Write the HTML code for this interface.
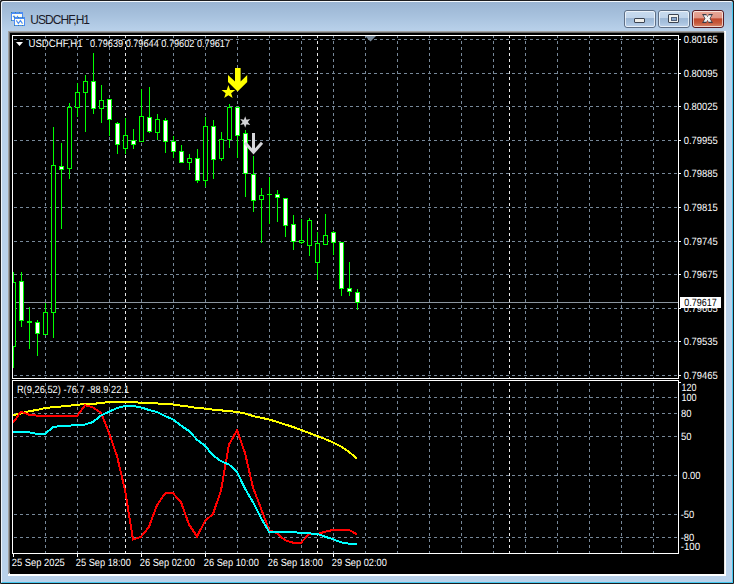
<!DOCTYPE html>
<html><head><meta charset="utf-8"><title>USDCHF,H1</title><style>
html,body{margin:0;padding:0;background:#ffffff;}
body{width:736px;height:584px;position:relative;overflow:hidden;font-family:"Liberation Sans",sans-serif;}
#win{position:absolute;left:0;top:0;width:732px;height:582px;border:1px solid #1c1c1e;border-radius:1px 1px 0 0;
 background:#b9d1ea;overflow:hidden;}
#win:before{content:"";position:absolute;left:0;top:0;right:0;bottom:0;border-left:1px solid #eef4fb;border-top:1px solid #f4f8fc;border-right:1px solid #46c8f0;border-bottom:1px solid #46c8f0;border-radius:3px 3px 0 0;box-shadow:0 0 0 3px #3a3e42;}
#title{position:absolute;left:1px;top:1px;width:730px;height:29px;border-radius:2px 2px 0 0;background:linear-gradient(#9ab4d2,#a8c2de 50%,#b9d1ea);}
#ico{position:absolute;left:9px;top:10px;}
#ttl{position:absolute;left:28.3px;top:11px;font-size:12px;color:#1a1a28;letter-spacing:-0.95px;white-space:nowrap;}
.btn{position:absolute;top:9px;width:30px;height:16px;border:1px solid #5e6f86;border-radius:3px;overflow:hidden;
 background:linear-gradient(#c8dbef 0%,#c0d4ea 45%,#9db8d6 47%,#a8c2de 75%,#bed4ec 100%);}
.bi{position:absolute;left:0;top:0;right:0;bottom:0;border:1px solid rgba(255,255,255,0.65);border-radius:2px;}
#bmin{left:623px;}
#bmax{left:657px;}
#bcls{left:691px;border-color:#5a1c24;background:linear-gradient(#e8a898 0%,#e09585 45%,#c0472c 48%,#c65a3c 75%,#d88a70 100%);}
#imin{position:absolute;left:9px;top:7px;width:9px;height:3px;border:1px solid #3c4452;border-radius:1px;background:#eeeeea;}
#imax{position:absolute;left:9px;top:3px;width:9px;height:7px;border:1px solid #3c4452;border-radius:1px;background:#f2f2ee;}
#imax div{position:absolute;left:2px;top:2px;width:4px;height:2px;border:0.5px solid #50607a;background:#8aa8cc;}
#icls{position:absolute;left:8px;top:2px;}
#chart{position:absolute;left:0;top:0;}
</style></head>
<body>

<div id="win">
  <div id="title">
    <svg id="ico" width="16" height="16" viewBox="0 0 16 16">
      <g shape-rendering="crispEdges">
      <rect x="0" y="0" width="12" height="9" fill="#4c8cf4"/>
      <rect x="1" y="2" width="10" height="6" fill="#fffff4"/>
      <path d="M0,0.5 H12 M0,8.5 H12" stroke="#3f8a5a" stroke-width="1" stroke-dasharray="1 3" opacity="0.7"/>
      <rect x="3" y="5" width="11" height="9" fill="#4c8cf4"/>
      <rect x="4" y="7" width="9" height="6" fill="#fffff4"/>
      <path d="M3,5.5 H14 M3,13.5 H14" stroke="#3f8a5a" stroke-width="1" stroke-dasharray="1 3" opacity="0.7"/>
      </g>
      <path d="M2,5.2 L3,4 L4,5.2 M6,4 L7,5" stroke="#4c8cf4" fill="none" stroke-width="1.1"/>
      <path d="M5.3,8.4 L7.4,11.6 L9.4,8.4 L11.5,11.6" stroke="#4c8cf4" fill="none" stroke-width="1.1"/>
    </svg>
    <span id="ttl">USDCHF,H1</span>
  </div>
  <div class="btn" id="bmin"><div class="bi"></div><div id="imin"></div></div>
  <div class="btn" id="bmax"><div class="bi"></div><div id="imax"><div></div></div></div>
  <div class="btn" id="bcls"><div class="bi"></div>
    <svg id="icls" width="14" height="12" viewBox="701 13 14 12"><polygon points="702.00,14.00 706.20,14.00 707.50,16.60 708.80,14.00 713.00,14.00 710.30,18.50 713.00,23.00 708.80,23.00 707.50,20.40 706.20,23.00 702.00,23.00 704.70,18.50" fill="#3a3c48"/><polygon points="703.54,15.26 706.56,15.26 707.50,17.13 708.44,15.26 711.46,15.26 709.52,18.50 711.46,21.74 708.44,21.74 707.50,19.87 706.56,21.74 703.54,21.74 705.48,18.50" fill="#f4f4f4"/></svg>
  </div>
</div>

<svg id="chart" width="736" height="584" viewBox="0 0 736 584"><rect x="8" y="31" width="718" height="545" fill="#ffffff"/><rect x="8" y="31" width="716" height="543" fill="#a0a0a0"/><rect x="9" y="32" width="715" height="542" fill="#696969"/><rect x="724" y="32" width="1" height="542" fill="#e3e3e3"/><rect x="9" y="573" width="716" height="1" fill="#e3e3e3"/><rect x="10" y="33" width="714" height="541" fill="#000"/><defs><clipPath id="cm"><rect x="13" y="36" width="665" height="342"/></clipPath><clipPath id="ci"><rect x="13" y="381" width="665" height="172"/></clipPath></defs><g clip-path="url(#cm)" stroke="#778899" stroke-width="1" stroke-dasharray="3 3" shape-rendering="crispEdges"><line x1="14" y1="39.5" x2="678" y2="39.5"/><line x1="14" y1="73.5" x2="678" y2="73.5"/><line x1="14" y1="106.5" x2="678" y2="106.5"/><line x1="14" y1="140.5" x2="678" y2="140.5"/><line x1="14" y1="173.5" x2="678" y2="173.5"/><line x1="14" y1="207.5" x2="678" y2="207.5"/><line x1="14" y1="241.5" x2="678" y2="241.5"/><line x1="14" y1="274.5" x2="678" y2="274.5"/><line x1="14" y1="308.5" x2="678" y2="308.5"/><line x1="14" y1="341.5" x2="678" y2="341.5"/><line x1="14" y1="375.5" x2="678" y2="375.5"/><line x1="45.5" y1="35" x2="45.5" y2="378"/><line x1="77.5" y1="35" x2="77.5" y2="378"/><line x1="109.5" y1="35" x2="109.5" y2="378"/><line x1="141.5" y1="35" x2="141.5" y2="378"/><line x1="173.5" y1="35" x2="173.5" y2="378"/><line x1="205.5" y1="35" x2="205.5" y2="378"/><line x1="237.5" y1="35" x2="237.5" y2="378"/><line x1="269.5" y1="35" x2="269.5" y2="378"/><line x1="301.5" y1="35" x2="301.5" y2="378"/><line x1="333.5" y1="35" x2="333.5" y2="378"/><line x1="365.5" y1="35" x2="365.5" y2="378"/><line x1="397.5" y1="35" x2="397.5" y2="378"/><line x1="429.5" y1="35" x2="429.5" y2="378"/><line x1="461.5" y1="35" x2="461.5" y2="378"/><line x1="493.5" y1="35" x2="493.5" y2="378"/><line x1="525.5" y1="35" x2="525.5" y2="378"/><line x1="557.5" y1="35" x2="557.5" y2="378"/><line x1="589.5" y1="35" x2="589.5" y2="378"/><line x1="621.5" y1="35" x2="621.5" y2="378"/><line x1="653.5" y1="35" x2="653.5" y2="378"/></g><g stroke="#e8e8e8" stroke-width="1" stroke-dasharray="3 3" shape-rendering="crispEdges"><line x1="125.5" y1="35" x2="125.5" y2="378"/><line x1="125.5" y1="383" x2="125.5" y2="553"/><line x1="317.5" y1="35" x2="317.5" y2="378"/><line x1="317.5" y1="383" x2="317.5" y2="553"/><line x1="509.5" y1="35" x2="509.5" y2="378"/><line x1="509.5" y1="383" x2="509.5" y2="553"/></g><g clip-path="url(#ci)" stroke="#778899" stroke-width="1" stroke-dasharray="3 3" shape-rendering="crispEdges"><line x1="14" y1="397.5" x2="678" y2="397.5"/><line x1="14" y1="413.5" x2="678" y2="413.5"/><line x1="14" y1="436.5" x2="678" y2="436.5"/><line x1="14" y1="475.5" x2="678" y2="475.5"/><line x1="14" y1="514.5" x2="678" y2="514.5"/><line x1="14" y1="537.5" x2="678" y2="537.5"/><line x1="45.5" y1="383" x2="45.5" y2="553"/><line x1="77.5" y1="383" x2="77.5" y2="553"/><line x1="109.5" y1="383" x2="109.5" y2="553"/><line x1="141.5" y1="383" x2="141.5" y2="553"/><line x1="173.5" y1="383" x2="173.5" y2="553"/><line x1="205.5" y1="383" x2="205.5" y2="553"/><line x1="237.5" y1="383" x2="237.5" y2="553"/><line x1="269.5" y1="383" x2="269.5" y2="553"/><line x1="301.5" y1="383" x2="301.5" y2="553"/><line x1="333.5" y1="383" x2="333.5" y2="553"/><line x1="365.5" y1="383" x2="365.5" y2="553"/><line x1="397.5" y1="383" x2="397.5" y2="553"/><line x1="429.5" y1="383" x2="429.5" y2="553"/><line x1="461.5" y1="383" x2="461.5" y2="553"/><line x1="493.5" y1="383" x2="493.5" y2="553"/><line x1="525.5" y1="383" x2="525.5" y2="553"/><line x1="557.5" y1="383" x2="557.5" y2="553"/><line x1="589.5" y1="383" x2="589.5" y2="553"/><line x1="621.5" y1="383" x2="621.5" y2="553"/><line x1="653.5" y1="383" x2="653.5" y2="553"/></g><rect x="13" y="302" width="665" height="1" fill="#8c96a0"/><g clip-path="url(#cm)" shape-rendering="crispEdges"><rect x="13" y="272" width="1" height="10" fill="#00ff00"/><rect x="13" y="347" width="1" height="21" fill="#00ff00"/><rect x="11" y="282" width="5" height="65" fill="#00ff00"/><rect x="12" y="283" width="3" height="63" fill="#000000"/><rect x="21" y="272" width="1" height="9" fill="#00ff00"/><rect x="21" y="321" width="1" height="6" fill="#00ff00"/><rect x="19" y="281" width="5" height="40" fill="#00ff00"/><rect x="20" y="282" width="3" height="38" fill="#ffffff"/><rect x="29" y="307" width="1" height="14" fill="#00ff00"/><rect x="29" y="323" width="1" height="26" fill="#00ff00"/><rect x="27" y="321" width="5" height="2" fill="#00ff00"/><rect x="37" y="320" width="1" height="2" fill="#00ff00"/><rect x="37" y="334" width="1" height="22" fill="#00ff00"/><rect x="35" y="322" width="5" height="12" fill="#00ff00"/><rect x="36" y="323" width="3" height="10" fill="#ffffff"/><rect x="45" y="303" width="1" height="9" fill="#00ff00"/><rect x="43" y="312" width="5" height="23" fill="#00ff00"/><rect x="44" y="313" width="3" height="21" fill="#000000"/><rect x="53" y="127" width="1" height="38" fill="#00ff00"/><rect x="53" y="313" width="1" height="25" fill="#00ff00"/><rect x="51" y="165" width="5" height="148" fill="#00ff00"/><rect x="52" y="166" width="3" height="146" fill="#000000"/><rect x="61" y="143" width="1" height="23" fill="#00ff00"/><rect x="61" y="170" width="1" height="59" fill="#00ff00"/><rect x="59" y="166" width="5" height="4" fill="#00ff00"/><rect x="60" y="167" width="3" height="2" fill="#ffffff"/><rect x="69" y="103" width="1" height="4" fill="#00ff00"/><rect x="69" y="169" width="1" height="10" fill="#00ff00"/><rect x="67" y="107" width="5" height="62" fill="#00ff00"/><rect x="68" y="108" width="3" height="60" fill="#000000"/><rect x="77" y="83" width="1" height="9" fill="#00ff00"/><rect x="77" y="108" width="1" height="9" fill="#00ff00"/><rect x="75" y="92" width="5" height="16" fill="#00ff00"/><rect x="76" y="93" width="3" height="14" fill="#000000"/><rect x="85" y="75" width="1" height="6" fill="#00ff00"/><rect x="85" y="93" width="1" height="39" fill="#00ff00"/><rect x="83" y="81" width="5" height="12" fill="#00ff00"/><rect x="84" y="82" width="3" height="10" fill="#000000"/><rect x="93" y="53" width="1" height="28" fill="#00ff00"/><rect x="93" y="109" width="1" height="5" fill="#00ff00"/><rect x="91" y="81" width="5" height="28" fill="#00ff00"/><rect x="92" y="82" width="3" height="26" fill="#ffffff"/><rect x="101" y="85" width="1" height="15" fill="#00ff00"/><rect x="101" y="109" width="1" height="14" fill="#00ff00"/><rect x="99" y="100" width="5" height="9" fill="#00ff00"/><rect x="100" y="101" width="3" height="7" fill="#000000"/><rect x="109" y="120" width="1" height="16" fill="#00ff00"/><rect x="107" y="99" width="5" height="21" fill="#00ff00"/><rect x="108" y="100" width="3" height="19" fill="#ffffff"/><rect x="117" y="122" width="1" height="1" fill="#00ff00"/><rect x="117" y="145" width="1" height="9" fill="#00ff00"/><rect x="115" y="123" width="5" height="22" fill="#00ff00"/><rect x="116" y="124" width="3" height="20" fill="#ffffff"/><rect x="125" y="118" width="1" height="17" fill="#00ff00"/><rect x="125" y="149" width="1" height="5" fill="#00ff00"/><rect x="123" y="135" width="5" height="14" fill="#00ff00"/><rect x="124" y="136" width="3" height="12" fill="#000000"/><rect x="133" y="129" width="1" height="11" fill="#00ff00"/><rect x="133" y="145" width="1" height="4" fill="#00ff00"/><rect x="131" y="140" width="5" height="5" fill="#00ff00"/><rect x="132" y="141" width="3" height="3" fill="#ffffff"/><rect x="141" y="89" width="1" height="27" fill="#00ff00"/><rect x="139" y="116" width="5" height="26" fill="#00ff00"/><rect x="140" y="117" width="3" height="24" fill="#000000"/><rect x="149" y="87" width="1" height="30" fill="#00ff00"/><rect x="149" y="132" width="1" height="1" fill="#00ff00"/><rect x="147" y="117" width="5" height="15" fill="#00ff00"/><rect x="148" y="118" width="3" height="13" fill="#ffffff"/><rect x="157" y="114" width="1" height="5" fill="#00ff00"/><rect x="157" y="133" width="1" height="7" fill="#00ff00"/><rect x="155" y="119" width="5" height="14" fill="#00ff00"/><rect x="156" y="120" width="3" height="12" fill="#000000"/><rect x="165" y="118" width="1" height="2" fill="#00ff00"/><rect x="165" y="142" width="1" height="11" fill="#00ff00"/><rect x="163" y="120" width="5" height="22" fill="#00ff00"/><rect x="164" y="121" width="3" height="20" fill="#ffffff"/><rect x="173" y="136" width="1" height="5" fill="#00ff00"/><rect x="173" y="152" width="1" height="6" fill="#00ff00"/><rect x="171" y="141" width="5" height="11" fill="#00ff00"/><rect x="172" y="142" width="3" height="9" fill="#ffffff"/><rect x="181" y="145" width="1" height="6" fill="#00ff00"/><rect x="179" y="151" width="5" height="12" fill="#00ff00"/><rect x="180" y="152" width="3" height="10" fill="#ffffff"/><rect x="189" y="154" width="1" height="4" fill="#00ff00"/><rect x="189" y="163" width="1" height="7" fill="#00ff00"/><rect x="187" y="158" width="5" height="5" fill="#00ff00"/><rect x="188" y="159" width="3" height="3" fill="#000000"/><rect x="197" y="149" width="1" height="9" fill="#00ff00"/><rect x="197" y="181" width="1" height="2" fill="#00ff00"/><rect x="195" y="158" width="5" height="23" fill="#00ff00"/><rect x="196" y="159" width="3" height="21" fill="#ffffff"/><rect x="205" y="117" width="1" height="9" fill="#00ff00"/><rect x="205" y="181" width="1" height="6" fill="#00ff00"/><rect x="203" y="126" width="5" height="55" fill="#00ff00"/><rect x="204" y="127" width="3" height="53" fill="#000000"/><rect x="213" y="120" width="1" height="6" fill="#00ff00"/><rect x="213" y="160" width="1" height="19" fill="#00ff00"/><rect x="211" y="126" width="5" height="34" fill="#00ff00"/><rect x="212" y="127" width="3" height="32" fill="#ffffff"/><rect x="221" y="132" width="1" height="7" fill="#00ff00"/><rect x="221" y="159" width="1" height="2" fill="#00ff00"/><rect x="219" y="139" width="5" height="20" fill="#00ff00"/><rect x="220" y="140" width="3" height="18" fill="#000000"/><rect x="229" y="104" width="1" height="3" fill="#00ff00"/><rect x="229" y="140" width="1" height="8" fill="#00ff00"/><rect x="227" y="107" width="5" height="33" fill="#00ff00"/><rect x="228" y="108" width="3" height="31" fill="#000000"/><rect x="237" y="136" width="1" height="22" fill="#00ff00"/><rect x="235" y="107" width="5" height="29" fill="#00ff00"/><rect x="236" y="108" width="3" height="27" fill="#ffffff"/><rect x="245" y="130" width="1" height="3" fill="#00ff00"/><rect x="245" y="174" width="1" height="23" fill="#00ff00"/><rect x="243" y="133" width="5" height="41" fill="#00ff00"/><rect x="244" y="134" width="3" height="39" fill="#ffffff"/><rect x="253" y="156" width="1" height="18" fill="#00ff00"/><rect x="253" y="201" width="1" height="11" fill="#00ff00"/><rect x="251" y="174" width="5" height="27" fill="#00ff00"/><rect x="252" y="175" width="3" height="25" fill="#ffffff"/><rect x="261" y="188" width="1" height="7" fill="#00ff00"/><rect x="261" y="200" width="1" height="43" fill="#00ff00"/><rect x="259" y="195" width="5" height="5" fill="#00ff00"/><rect x="260" y="196" width="3" height="3" fill="#000000"/><rect x="269" y="177" width="1" height="47" fill="#00ff00"/><rect x="267" y="194" width="5" height="1" fill="#00ff00"/><rect x="277" y="190" width="1" height="4" fill="#00ff00"/><rect x="277" y="198" width="1" height="24" fill="#00ff00"/><rect x="275" y="194" width="5" height="4" fill="#00ff00"/><rect x="276" y="195" width="3" height="2" fill="#ffffff"/><rect x="285" y="226" width="1" height="11" fill="#00ff00"/><rect x="283" y="198" width="5" height="28" fill="#00ff00"/><rect x="284" y="199" width="3" height="26" fill="#ffffff"/><rect x="293" y="215" width="1" height="9" fill="#00ff00"/><rect x="293" y="242" width="1" height="8" fill="#00ff00"/><rect x="291" y="224" width="5" height="18" fill="#00ff00"/><rect x="292" y="225" width="3" height="16" fill="#ffffff"/><rect x="301" y="219" width="1" height="21" fill="#00ff00"/><rect x="301" y="243" width="1" height="1" fill="#00ff00"/><rect x="299" y="240" width="5" height="3" fill="#00ff00"/><rect x="300" y="241" width="3" height="1" fill="#000000"/><rect x="309" y="218" width="1" height="2" fill="#00ff00"/><rect x="309" y="246" width="1" height="10" fill="#00ff00"/><rect x="307" y="220" width="5" height="26" fill="#00ff00"/><rect x="308" y="221" width="3" height="24" fill="#000000"/><rect x="317" y="232" width="1" height="11" fill="#00ff00"/><rect x="317" y="263" width="1" height="17" fill="#00ff00"/><rect x="315" y="243" width="5" height="20" fill="#00ff00"/><rect x="316" y="244" width="3" height="18" fill="#000000"/><rect x="325" y="214" width="1" height="21" fill="#00ff00"/><rect x="323" y="235" width="5" height="10" fill="#00ff00"/><rect x="324" y="236" width="3" height="8" fill="#000000"/><rect x="333" y="231" width="1" height="1" fill="#00ff00"/><rect x="333" y="243" width="1" height="12" fill="#00ff00"/><rect x="331" y="232" width="5" height="11" fill="#00ff00"/><rect x="332" y="233" width="3" height="9" fill="#ffffff"/><rect x="341" y="289" width="1" height="7" fill="#00ff00"/><rect x="339" y="242" width="5" height="47" fill="#00ff00"/><rect x="340" y="243" width="3" height="45" fill="#ffffff"/><rect x="349" y="262" width="1" height="26" fill="#00ff00"/><rect x="349" y="292" width="1" height="4" fill="#00ff00"/><rect x="347" y="288" width="5" height="4" fill="#00ff00"/><rect x="348" y="289" width="3" height="2" fill="#ffffff"/><rect x="357" y="289" width="1" height="3" fill="#00ff00"/><rect x="357" y="303" width="1" height="7" fill="#00ff00"/><rect x="355" y="292" width="5" height="11" fill="#00ff00"/><rect x="356" y="293" width="3" height="9" fill="#ffffff"/></g><polygon points="228,75 235,81.5 235,68 240.6,68 240.6,81.5 247.2,75 247.2,82 237.6,91.5 228,82" fill="#ffff00"/><polygon points="228.40,85.10 230.10,89.95 235.25,90.08 231.16,93.20 232.63,98.12 228.40,95.20 224.17,98.12 225.64,93.20 221.55,90.08 226.70,89.95" fill="#ffff00"/><polygon points="245.20,116.20 246.50,119.75 250.22,119.10 247.80,122.00 250.22,124.90 246.50,124.25 245.20,127.80 243.90,124.25 240.18,124.90 242.60,122.00 240.18,119.10 243.90,119.75" fill="#d2d2d6"/><path d="M253.5,133 V151 M245,142.8 L253.5,152.3 L262,142.8" fill="none" stroke="#d6d6da" stroke-width="3" stroke-linejoin="miter" stroke-miterlimit="10"/><polygon points="365,36 376,36 370.5,41.5" fill="#778899"/><g fill="none" stroke="#ffffff" stroke-width="1" shape-rendering="crispEdges"><rect x="12.5" y="35.5" width="666" height="343"/><rect x="12.5" y="380.5" width="666" height="173"/></g><g fill="#ffffff" shape-rendering="crispEdges"><rect x="679" y="39" width="2" height="1"/><rect x="679" y="73" width="2" height="1"/><rect x="679" y="106" width="2" height="1"/><rect x="679" y="140" width="2" height="1"/><rect x="679" y="173" width="2" height="1"/><rect x="679" y="207" width="2" height="1"/><rect x="679" y="241" width="2" height="1"/><rect x="679" y="274" width="2" height="1"/><rect x="679" y="308" width="2" height="1"/><rect x="679" y="341" width="2" height="1"/><rect x="679" y="375" width="2" height="1"/><rect x="679" y="382" width="2" height="1"/><rect x="13" y="554" width="1" height="3"/><rect x="77" y="554" width="1" height="3"/><rect x="141" y="554" width="1" height="3"/><rect x="205" y="554" width="1" height="3"/><rect x="269" y="554" width="1" height="3"/><rect x="333" y="554" width="1" height="3"/></g><g clip-path="url(#ci)"><polyline points="13,415 21,413.5 29,411.3 37,409.9 45,408 53,407.2 61,406.5 69,405.8 77,404.8 85,404 93,403.9 101,403 109,402 117,402 125,402 133,402 141,402.8 149,403 157,403.4 165,404 173,404.5 181,405.6 189,406.7 197,407.9 205,408.6 213,409.7 221,410.4 229,411 237,412 245,413.5 253,416 261,417.7 269,419.5 277,421.8 285,424.4 293,427 301,430 309,433 317,436 325,439 333,442.5 341,446.5 349,451.8 357,458.8" fill="none" stroke="#ffff00" stroke-width="2" stroke-linejoin="miter" shape-rendering="crispEdges"/><polyline points="13,422.8 21,411.7 29,414.7 37,415.6 45,415.6 53,415.8 61,416 69,416 77,416 85,405.2 93,407.4 101,412.8 109,433 117,456 125,490 133,539.5 141,536.8 149,526.8 157,505 165,493.5 173,493.2 181,502.2 189,524.5 197,536.5 205,521 213,514 221,490.5 229,444.6 237,430.2 245,453 253,487.5 261,508.5 269,530 277,533.5 285,540.2 293,542.7 301,542.7 309,534.3 317,534 325,531.8 333,529.9 341,529.7 349,529.9 357,534.3" fill="none" stroke="#ff0000" stroke-width="2" stroke-linejoin="miter" shape-rendering="crispEdges"/><polyline points="13,432.2 21,432.2 29,432.2 37,434 45,434 53,427 61,425.9 69,425.7 77,425 85,424.5 93,422 101,415.5 109,411.7 117,408 125,406 133,406 141,407.4 149,410 157,412 165,416 173,419.5 181,425.6 189,431 197,439.7 205,445.8 213,455.4 221,461.2 229,464.5 237,472 245,488.5 253,502.2 261,518 269,531.7 277,531.8 285,531.8 293,532 301,533 309,533.4 317,533.8 325,536.7 333,539.2 341,542.4 349,543.6 357,543.7" fill="none" stroke="#00ffff" stroke-width="2" stroke-linejoin="miter" shape-rendering="crispEdges"/></g><polygon points="16,42 23,42 19.5,46" fill="#ffffff"/><g font-family="Liberation Sans, sans-serif" text-rendering="geometricPrecision"><text x="28.5" y="47" font-size="10.5" fill="#ffffff" textLength="54" lengthAdjust="spacingAndGlyphs" >USDCHF,H1</text><text x="90" y="47" font-size="10.5" fill="#ffffff" textLength="140" lengthAdjust="spacingAndGlyphs" >0.79639 0.79644 0.79602 0.79617</text><text x="683.7" y="43" font-size="10.5" fill="#ffffff" textLength="34" lengthAdjust="spacingAndGlyphs" >0.80165</text><text x="683.7" y="77" font-size="10.5" fill="#ffffff" textLength="34" lengthAdjust="spacingAndGlyphs" >0.80095</text><text x="683.7" y="110" font-size="10.5" fill="#ffffff" textLength="34" lengthAdjust="spacingAndGlyphs" >0.80025</text><text x="683.7" y="144" font-size="10.5" fill="#ffffff" textLength="34" lengthAdjust="spacingAndGlyphs" >0.79955</text><text x="683.7" y="177" font-size="10.5" fill="#ffffff" textLength="34" lengthAdjust="spacingAndGlyphs" >0.79885</text><text x="683.7" y="211" font-size="10.5" fill="#ffffff" textLength="34" lengthAdjust="spacingAndGlyphs" >0.79815</text><text x="683.7" y="245" font-size="10.5" fill="#ffffff" textLength="34" lengthAdjust="spacingAndGlyphs" >0.79745</text><text x="683.7" y="278" font-size="10.5" fill="#ffffff" textLength="34" lengthAdjust="spacingAndGlyphs" >0.79675</text><text x="683.7" y="312" font-size="10.5" fill="#ffffff" textLength="34" lengthAdjust="spacingAndGlyphs" >0.79605</text><text x="683.7" y="345" font-size="10.5" fill="#ffffff" textLength="34" lengthAdjust="spacingAndGlyphs" >0.79535</text><text x="683.7" y="379" font-size="10.5" fill="#ffffff" textLength="34" lengthAdjust="spacingAndGlyphs" >0.79465</text><text x="681.6" y="391" font-size="10.5" fill="#ffffff" textLength="15" lengthAdjust="spacingAndGlyphs" >120</text><text x="681.4" y="401" font-size="10.5" fill="#ffffff" textLength="15.2" lengthAdjust="spacingAndGlyphs" >100</text><text x="681" y="417" font-size="10.5" fill="#ffffff" textLength="10.5" lengthAdjust="spacingAndGlyphs" >80</text><text x="681" y="440" font-size="10.5" fill="#ffffff" textLength="10.5" lengthAdjust="spacingAndGlyphs" >50</text><text x="682.2" y="479" font-size="10.5" fill="#ffffff" textLength="18.3" lengthAdjust="spacingAndGlyphs" >0.00</text><text x="680.7" y="518" font-size="10.5" fill="#ffffff" textLength="13.6" lengthAdjust="spacingAndGlyphs" >-50</text><text x="680.7" y="541" font-size="10.5" fill="#ffffff" textLength="13.6" lengthAdjust="spacingAndGlyphs" >-80</text><text x="680.7" y="550" font-size="10.5" fill="#ffffff" textLength="19.4" lengthAdjust="spacingAndGlyphs" >-100</text><text x="16.9" y="393" font-size="10.5" fill="#ffffff" textLength="112.2" lengthAdjust="spacingAndGlyphs" >R(9,26,52) -76.7 -88.9 22.1</text><text x="11.8" y="566" font-size="10.5" fill="#ffffff" textLength="53" lengthAdjust="spacingAndGlyphs" >25 Sep 2025</text><text x="75.8" y="566" font-size="10.5" fill="#ffffff" textLength="55" lengthAdjust="spacingAndGlyphs" >25 Sep 18:00</text><text x="139.8" y="566" font-size="10.5" fill="#ffffff" textLength="55" lengthAdjust="spacingAndGlyphs" >26 Sep 02:00</text><text x="203.8" y="566" font-size="10.5" fill="#ffffff" textLength="55" lengthAdjust="spacingAndGlyphs" >26 Sep 10:00</text><text x="267.8" y="566" font-size="10.5" fill="#ffffff" textLength="55" lengthAdjust="spacingAndGlyphs" >26 Sep 18:00</text><text x="331.8" y="566" font-size="10.5" fill="#ffffff" textLength="55" lengthAdjust="spacingAndGlyphs" >29 Sep 02:00</text></g><rect x="680" y="297" width="41" height="11" fill="#ffffff"/><text x="684.3" y="306" font-size="10.5" fill="#000000" textLength="32.5" lengthAdjust="spacingAndGlyphs" text-rendering="geometricPrecision" font-family="Liberation Sans, sans-serif">0.79617</text></svg>
</body></html>
